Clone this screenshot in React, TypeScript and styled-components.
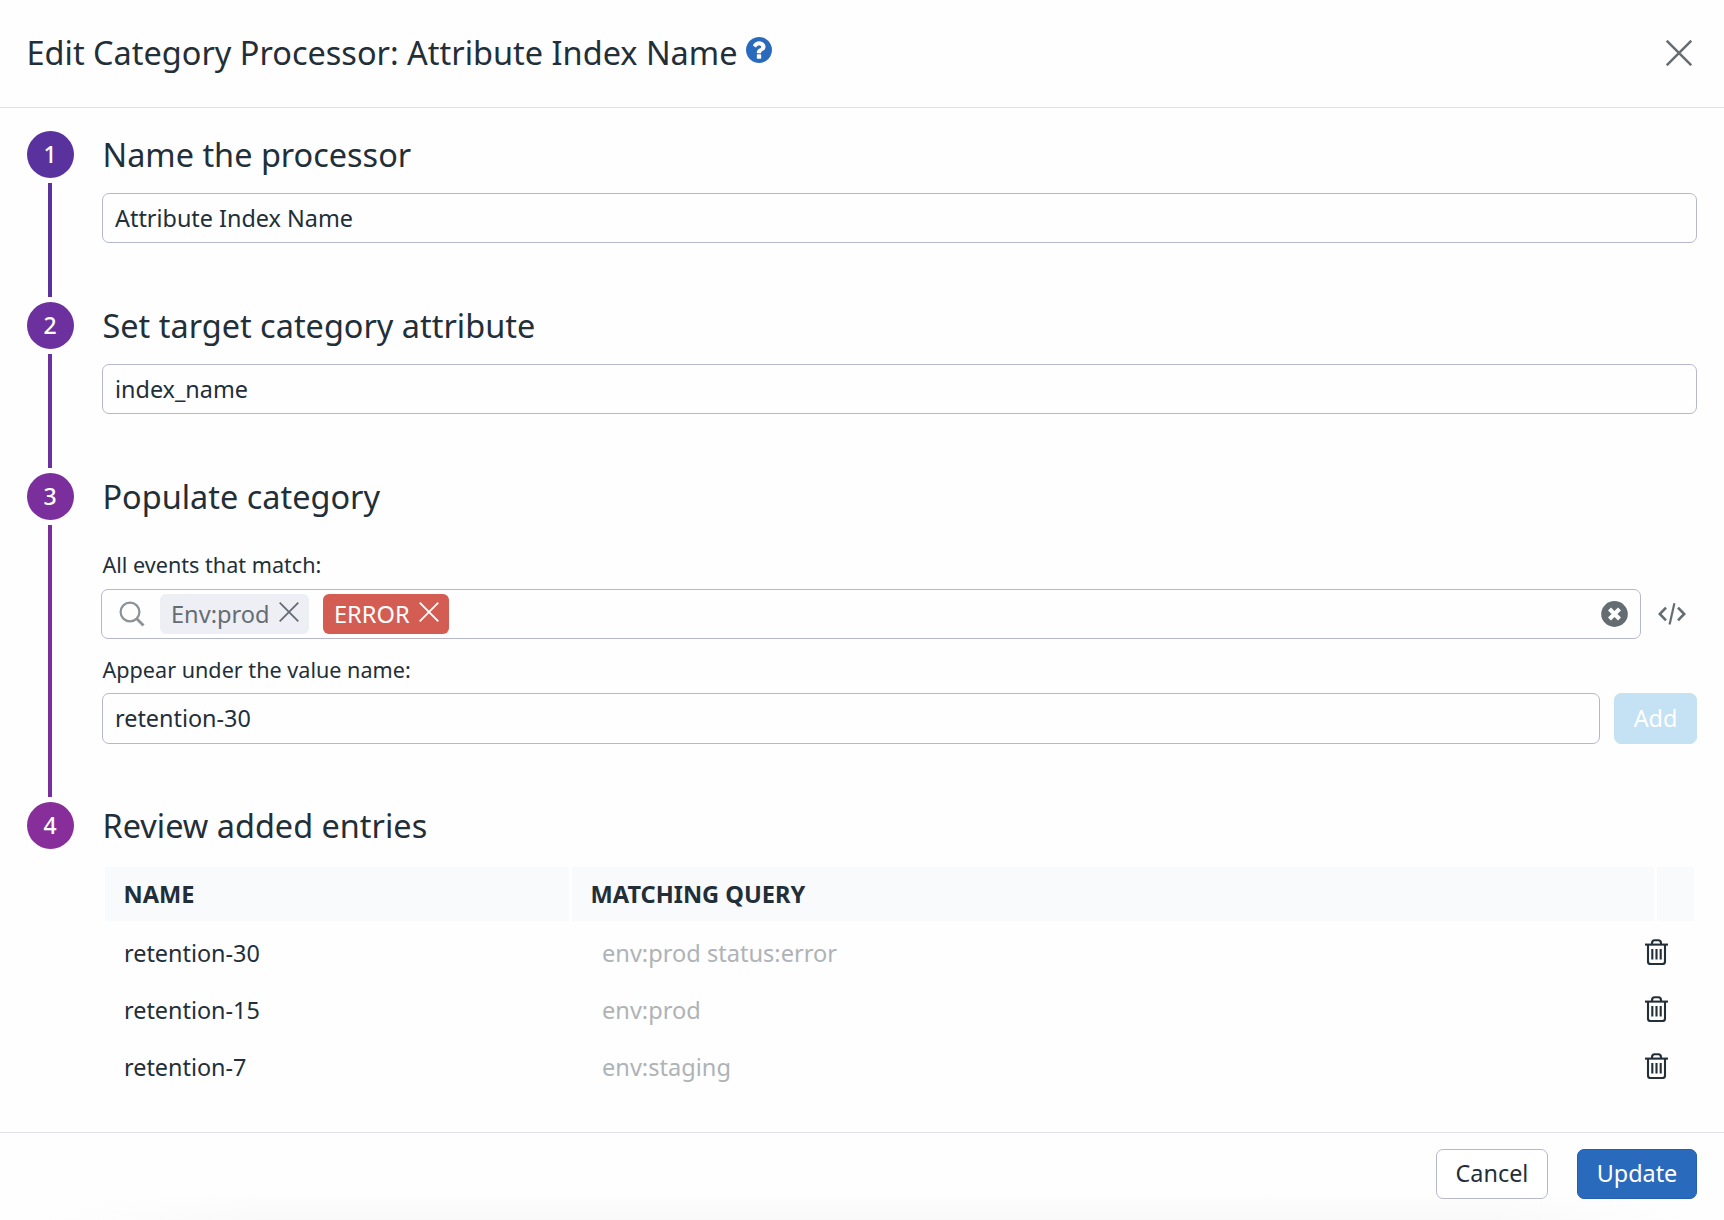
import React from "react";
import styled, { createGlobalStyle } from "styled-components";

const ink = "#232f38";
const line = "#b5b8ca";
const muted = "#656d73";

const GlobalStyle = createGlobalStyle`
  * { box-sizing: border-box; }
  html, body { margin: 0; padding: 0; }
  body {
    background: #fefefe;
    color: ${ink};
    font-family: "Noto Sans", "Open Sans", sans-serif;
    font-size: 23.4px;
  }
  button, input { font: inherit; color: inherit; margin: 0; }
  svg { display: block; flex: none; }
`;

const Modal = styled.div`
  width: 1724px;
  height: 1220px;
  display: flex;
  flex-direction: column;
  overflow: hidden;
  background: #fefefe;
`;

const Header = styled.header`
  height: 108px;
  display: flex;
  align-items: center;
  padding: 0 32px 2px 26.5px;
  border-bottom: 1px solid #e1e1ea;
`;

const Title = styled.h1`
  margin: 0;
  font-size: 32.47px;
  font-weight: 400;
  line-height: 48px;
`;

const HelpButton = styled.button`
  margin: 0 auto 5px 9px;
  padding: 0;
  border: 0;
  background: none;
  color: #2a6abc;
`;

const PlainButton = styled.button`
  display: flex;
  padding: 0;
  border: 0;
  background: none;
  color: ${muted};
`;

const Body = styled.main`
  flex: 1;
  padding: 23px 27px 0;
`;

const StepRow = styled.section<{ $bottom: number }>`
  display: flex;
  & > div:last-child { padding-bottom: ${(p) => p.$bottom}px; }
`;

const Rail = styled.div<{ $color: string }>`
  width: 47px;
  margin-right: 28px;
  display: flex;
  flex-direction: column;
  align-items: center;
  color: ${(p) => p.$color};
`;

const Badge = styled.div`
  width: 47px;
  height: 47px;
  border-radius: 50%;
  display: flex;
  align-items: center;
  justify-content: center;
  padding-right: 1px;
  background: currentColor;
  span { color: #fff; font-size: 23px; font-weight: 500; line-height: 47px; }
`;

const Connector = styled.div`
  flex: 1;
  width: 4px;
  margin: 5px 1px 5px 0;
  background: currentColor;
`;

const Content = styled.div`
  flex: 1;
  min-width: 0;
`;

const Heading = styled.h2<{ $gap: number }>`
  margin: 0 0 ${(p) => p.$gap}px;
  padding-left: 0.5px;
  font-size: 32.45px;
  font-weight: 400;
  line-height: 47px;
`;

const Field = styled.input<{ $height?: number }>`
  display: block;
  flex: 1;
  width: 100%;
  min-width: 0;
  height: ${(p) => p.$height ?? 50}px;
  padding: 0 12px ${(p) => (p.$height ? 2 : 0)}px;
  border: 1px solid ${line};
  border-radius: 7px;
  background: transparent;
  outline: none;
`;

const Label = styled.label<{ $gap: number }>`
  display: block;
  margin-bottom: ${(p) => p.$gap}px;
  padding-left: 0.5px;
  font-size: 21.6px;
  line-height: 30px;
`;

const QueryRow = styled.div`
  display: flex;
  align-items: center;
  margin: 0 11px 16px -1px;
  gap: 17px;
`;

const SearchBox = styled.div`
  flex: 1;
  height: 50px;
  display: flex;
  align-items: center;
  padding: 0 12px 0 17px;
  border: 1px solid ${line};
  border-radius: 7px;
`;

const Chip = styled.div<{ $tone: "neutral" | "error" }>`
  height: 40px;
  width: ${(p) => (p.$tone === "error" ? 126 : 149)}px;
  margin-left: ${(p) => (p.$tone === "error" ? 14 : 15)}px;
  display: flex;
  align-items: center;
  justify-content: space-between;
  padding: 0 10px 0 11px;
  border-radius: 6px;
  font-size: 23.6px;
  background: ${(p) => (p.$tone === "error" ? "#d35d52" : "#eeeff5")};
  color: ${(p) => (p.$tone === "error" ? "#fff" : "#656d73")};
  svg { margin-bottom: 5px; }
`;

const Spacer = styled.div`
  flex: 1;
`;

const ValueRow = styled.div`
  display: flex;
  gap: 14px;
`;

const Button = styled.button<{ $kind: "primary" | "outline" | "disabled"; $width: number }>`
  width: ${(p) => p.$width}px;
  height: ${(p) => (p.$kind === "disabled" ? 51 : 50)}px;
  padding: 0 0 2px;
  border-radius: 7px;
  border: 1px solid
    ${(p) => ({ primary: "#235fb4", outline: line, disabled: "#c5e1f4" })[p.$kind]};
  background: ${(p) => ({ primary: "#2a6abc", outline: "#fff", disabled: "#c5e1f4" })[p.$kind]};
  color: ${(p) => (p.$kind === "outline" ? ink : "#fff")};
`;

const Table = styled.div`
  margin: 0 3px;
`;

const TableHead = styled.div`
  display: grid;
  grid-template-columns: 464px 1fr 37px;
  gap: 3px;
  height: 54px;
  margin-bottom: 3px;
`;

const HeadCell = styled.div`
  padding-left: 18.5px;
  background: #f9fafc;
  font-size: 23.6px;
  font-weight: 700;
  line-height: 54px;
`;

const Entry = styled.div`
  display: grid;
  grid-template-columns: 467px 1fr auto;
  align-items: center;
  height: 57px;
  padding-right: 26px;
`;

const EntryName = styled.div`
  padding-left: 19px;
`;

const EntryQuery = styled.div`
  padding-left: 30px;
  font-size: 23.6px;
  color: #afb3b6;
`;

const TrashButton = styled(PlainButton)`
  margin-bottom: 1px;
  color: ${ink};
`;

const Footer = styled.footer`
  height: 88px;
  display: flex;
  justify-content: flex-end;
  align-items: flex-start;
  gap: 29px;
  padding: 16px 27px 0;
  border-top: 1px solid #e1e1ea;
  background:
    linear-gradient(to right, #fefefe 2%, rgba(254, 254, 254, 0) 16%, rgba(254, 254, 254, 0) 86%, #fefefe 98%),
    linear-gradient(to top, #f9f9f9, #fefefe 28px);
`;

const HelpIcon = () => (
  <svg width="26" height="26" viewBox="128 128 1536 1536" fill="currentColor">
    <path d="M1024 1376v-192q0-14-9-23t-23-9H800q-14 0-23 9t-9 23v192q0 14 9 23t23 9h192q14 0 23-9t9-23zm256-672q0-88-55.5-163T1086 425t-170-41q-243 0-371 213-15 24 8 42l132 100q7 6 19 6 16 0 25-12 53-68 86-92 34-24 86-24 48 0 85.5 26t37.5 59q0 38-20 61t-68 45q-63 28-115.5 86.500T768 1020v36q0 14 9 23t23 9h192q14 0 23-9t9-23q0-19 21.500-49.500T1100 957q32-18 49-28.500t46-35 44.500-48 28-60.500 12.500-81zm384 192q0 209-103 385.500T1281.500 1561 896 1664t-385.500-103T231 1281.500 128 896t103-385.500T510.500 231 896 128t385.500 103T1561 510.500 1664 896z" />
  </svg>
);

const CrossIcon = ({ size, weight }: { size: number; weight: number }) => (
  <svg width={size} height={size} viewBox={`0 0 ${size} ${size}`} fill="none" stroke="currentColor" strokeWidth={weight}>
    <path d={`M.7.7 ${size - 0.7} ${size - 0.7}M${size - 0.7}.7.7 ${size - 0.7}`} />
  </svg>
);

const SearchIcon = () => (
  <svg width="26" height="26" viewBox="0 0 26 26" fill="none" stroke="#8c9295">
    <circle cx="11" cy="11" r="9.400" strokeWidth="2.200" />
    <path d="M17.500 17.500 24.500 24.500" strokeWidth="2.800" />
  </svg>
);

const ClearIcon = () => (
  <svg width="27" height="26" viewBox="0 0 27 26">
    <ellipse cx="13.500" cy="13" rx="13.300" ry="12.900" fill={muted} />
    <path d="M8.500 8l10 10M18.500 8l-10 10" stroke="#fff" strokeWidth="4.200" />
  </svg>
);

const CodeIcon = () => (
  <svg width="28" height="24" viewBox="0 0 28 24" fill="none" stroke="currentColor" strokeWidth="2.600">
    <path d="M8 5.600 1.800 12 8 18.400M20 5.600 26.200 12 20 18.400" />
    <path d="M16.400 1.200 11.600 22.600" strokeWidth="2.200" />
  </svg>
);

const TrashIcon = () => (
  <svg width="23" height="26" viewBox="0 0 23 26" fill="none" stroke="currentColor" strokeWidth="2.100">
    <path d="M0 5.600H23" />
    <path d="M7 5.600V4.200Q7 1.200 9.700 1.200H13.300Q16 1.200 16 4.200V5.600" />
    <path d="M3 5.600V22.500Q3 25 5.500 25H17.500Q20 25 20 22.500V5.600" />
    <path d="M7.300 10V20.500M11.500 10V20.500M15.700 10V20.500" />
  </svg>
);

type StepProps = {
  n: number;
  color: string;
  title: string;
  gap?: number;
  bottom?: number;
  last?: boolean;
  children: React.ReactNode;
};

const Step = ({ n, color, title, gap = 15, bottom = 59, last, children }: StepProps) => (
  <StepRow $bottom={bottom}>
    <Rail $color={color}>
      <Badge>
        <span>{n}</span>
      </Badge>
      {!last && <Connector />}
    </Rail>
    <Content>
      <Heading $gap={gap}>{title}</Heading>
      {children}
    </Content>
  </StepRow>
);

const entries = [
  { name: "retention-30", query: "env:prod status:error" },
  { name: "retention-15", query: "env:prod" },
  { name: "retention-7", query: "env:staging" },
];

export default function App() {
  return (
    <>
      <GlobalStyle />
      <Modal>
        <Header>
          <Title>Edit Category Processor: Attribute Index Name</Title>
          <HelpButton>
            <HelpIcon />
          </HelpButton>
          <PlainButton>
            <CrossIcon size={26} weight={2.5} />
          </PlainButton>
        </Header>
        <Body>
          <Step n={1} color="#5a329e" title="Name the processor">
            <Field defaultValue="Attribute Index Name" />
          </Step>
          <Step n={2} color="#6c319e" title="Set target category attribute">
            <Field defaultValue="index_name" />
          </Step>
          <Step n={3} color="#7a2f9d" title="Populate category" gap={30} bottom={58}>
            <Label $gap={9}>All events that match:</Label>
            <QueryRow>
              <SearchBox>
                <SearchIcon />
                <Chip $tone="neutral">
                  Env:prod
                  <CrossIcon size={20} weight={1.8} />
                </Chip>
                <Chip $tone="error">
                  ERROR
                  <CrossIcon size={20} weight={1.8} />
                </Chip>
                <Spacer />
                <PlainButton>
                  <ClearIcon />
                </PlainButton>
              </SearchBox>
              <PlainButton>
                <CodeIcon />
              </PlainButton>
            </QueryRow>
            <Label $gap={8}>Appear under the value name:</Label>
            <ValueRow>
              <Field $height={51} defaultValue="retention-30" />
              <Button $kind="disabled" $width={83}>
                Add
              </Button>
            </ValueRow>
          </Step>
          <Step n={4} color="#872e9b" title="Review added entries" gap={18} bottom={0} last>
            <Table>
              <TableHead>
                <HeadCell>NAME</HeadCell>
                <HeadCell>MATCHING QUERY</HeadCell>
                <HeadCell />
              </TableHead>
              {entries.map((entry) => (
                <Entry key={entry.name}>
                  <EntryName>{entry.name}</EntryName>
                  <EntryQuery>{entry.query}</EntryQuery>
                  <TrashButton>
                    <TrashIcon />
                  </TrashButton>
                </Entry>
              ))}
            </Table>
          </Step>
        </Body>
        <Footer>
          <Button $kind="outline" $width={112}>
            Cancel
          </Button>
          <Button $kind="primary" $width={120}>
            Update
          </Button>
        </Footer>
      </Modal>
    </>
  );
}
